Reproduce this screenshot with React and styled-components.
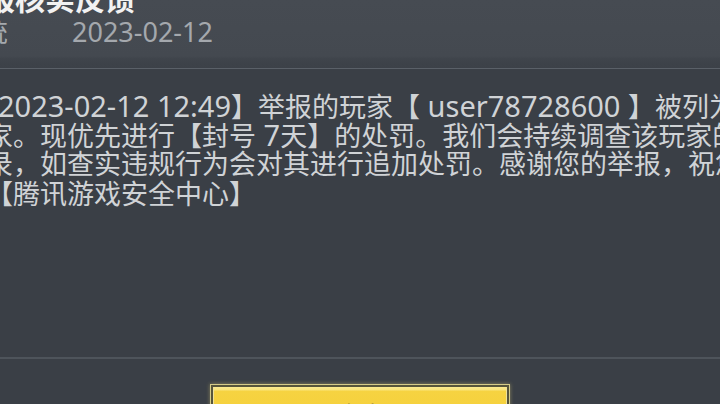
import React from "react";
import styled, { createGlobalStyle } from "styled-components";

const Global = createGlobalStyle`
  html, body { margin: 0; padding: 0; background: #3a3f46; overflow: hidden; }
  * { box-sizing: border-box; }
`;

const Page = styled.div`
  width: 720px;
  height: 404px;
  overflow: hidden;
  display: flex;
  flex-direction: column;
  background: #3a3f46;
  font-family: "Noto Sans", "Noto Sans CJK SC", sans-serif;
  text-spacing-trim: space-all;
`;

const Header = styled.header`
  height: 69px;
  flex: none;
  background: linear-gradient(
    #464b52 0,
    #444950 56px,
    #3f444b 59px,
    #3c4148 67px
  );
  border-bottom: 1px solid #5a6068;
  margin-left: -46px;
  overflow: hidden;
`;

const Title = styled.h1`
  margin: -18px 0 0 1px;
  font-family: "Noto Sans CJK SC", sans-serif;
  font-size: 30px;
  line-height: 30px;
  height: 30px;
  font-weight: 700;
  color: #f2f2f2;
  white-space: nowrap;
`;

const Meta = styled.div`
  display: flex;
  align-items: baseline;
  gap: 64px;
  margin-top: 4px;
  color: #a4a8ad;
  font-size: 27px;
  line-height: 30px;
  white-space: nowrap;
`;

const Source = styled.span`
  font-family: "Noto Sans CJK SC", sans-serif;
`;

const DateText = styled.span`
  font-family: "Noto Sans", sans-serif;
`;

const Body = styled.main`
  flex: 1;
  padding-top: 22px;
  overflow: hidden;
`;

const Line = styled.div`
  height: 29.2px;
  line-height: 29px;
  font-size: 27px;
  color: #d0d3d6;
  white-space: nowrap;
  margin-left: ${(p) => p.$shift}px;
`;

const Latin = styled.span`
  font-family: "Noto Sans", sans-serif;
  font-size: 29px;
`;

const Footer = styled.footer`
  flex: none;
  height: 47px;
  border-top: 2px solid #4e545b;
  display: flex;
  justify-content: center;
  padding-top: 25px;
`;

const Button = styled.button`
  width: 300px;
  height: 60px;
  flex: none;
  margin: 0;
  padding: 2px;
  border: 1px solid #d6cc88;
  background: #57553b;
  box-shadow: 0 0 4px rgba(235, 215, 120, 0.45);
  cursor: pointer;
  display: flex;
`;

const Face = styled.span`
  flex: 1;
  display: block;
  padding-top: 8px;
  background: linear-gradient(
    #fbea8e 0,
    #f9e47c 3px,
    #f6d341 4px,
    #f4cd36 100%
  );
  border-left: 1px solid #efe29a;
  border-right: 1px solid #efe29a;
  font-family: "Noto Sans CJK SC", sans-serif;
  font-size: 26px;
  line-height: 40px;
  color: #3b3a2c;
  text-align: center;
`;

export default function App() {
  return (
    <>
      <Global />
      <Page lang="zh-CN">
        <Header>
          <Title>举报核实反馈</Title>
          <Meta>
            <Source>系统</Source>
            <DateText>2023-02-12</DateText>
          </Meta>
        </Header>
        <Body>
          <Line $shift={-29}>
            【<Latin>2023-02-12 12:49</Latin>】举报的玩家【<Latin> user78728600 </Latin>】被列为违规玩
          </Line>
          <Line $shift={-14}>
            家。现优先进行【封号<Latin> 7</Latin>天】的处罚。我们会持续调查该玩家的
          </Line>
          <Line $shift={-14}>
            录，如查实违规行为会对其进行追加处罚。感谢您的举报，祝您
          </Line>
          <Line $shift={-14}>【腾讯游戏安全中心】</Line>
        </Body>
        <Footer>
          <Button>
            <Face>确定</Face>
          </Button>
        </Footer>
      </Page>
    </>
  );
}
